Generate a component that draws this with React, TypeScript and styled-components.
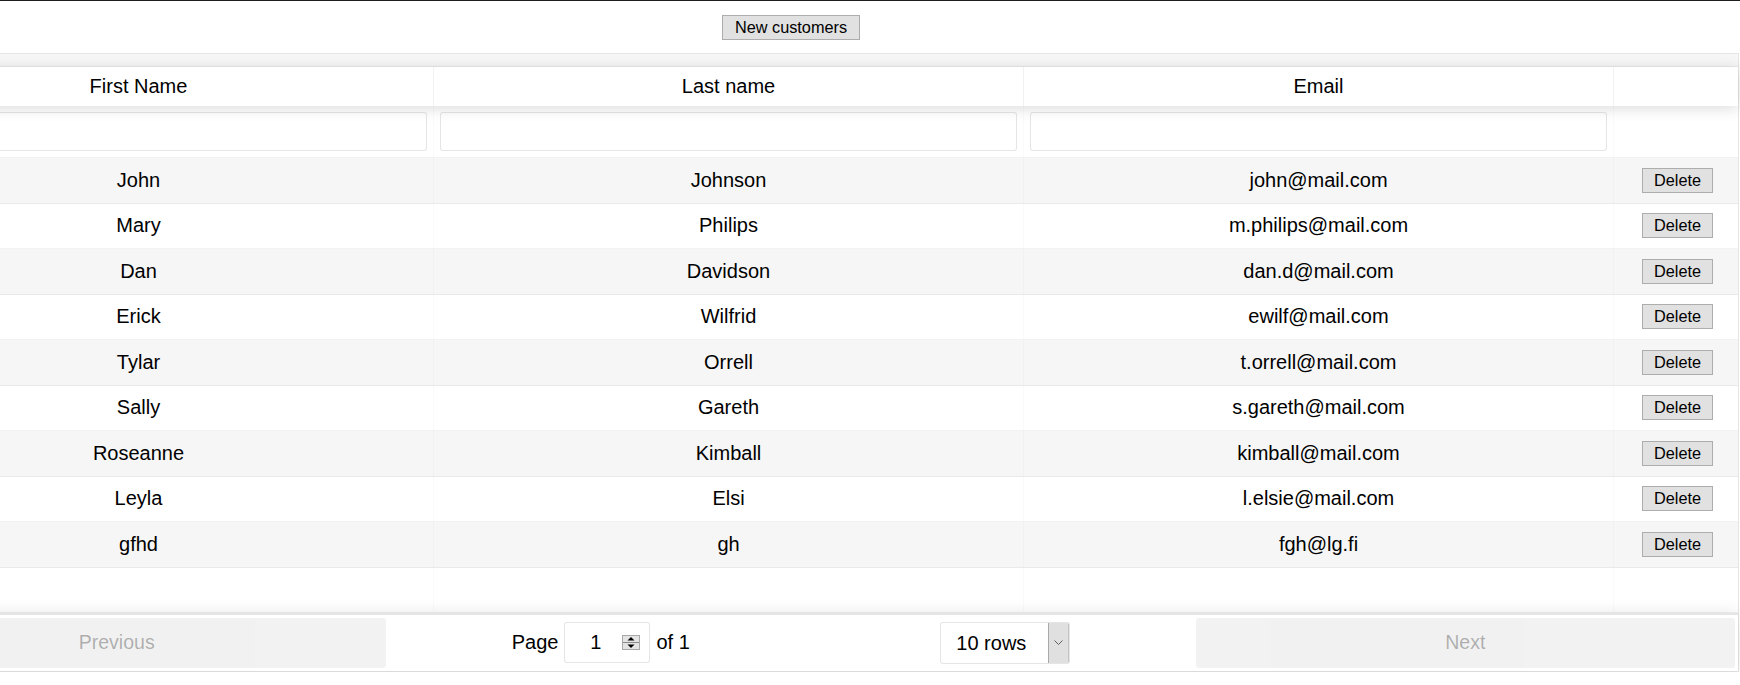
import React from 'react';
import styled, { createGlobalStyle } from 'styled-components';

const GlobalStyle = createGlobalStyle`
  html, body { margin: 0; padding: 0; background: #fff; overflow: hidden; }
  body {
    font-family: "Liberation Sans", Arial, sans-serif;
    border-top: 1px solid #1f1f1f;
    color: #000;
  }
  * { box-sizing: border-box; }
`;

const Page = styled.div`
  margin-left: -157px;
  width: 1896px;
`;

const Toolbar = styled.div`
  height: 52px;
  display: flex;
  align-items: center;
  justify-content: center;
`;

const WinButton = styled.button<{ $pad?: number }>`
  font-family: "Liberation Sans", Arial, sans-serif;
  font-size: 16.3px;
  height: 25px;
  line-height: 23px;
  padding: 0 ${p => p.$pad ?? 12}px;
  background: #e1e1e1;
  border: 1px solid #adadad;
  border-radius: 0;
  color: #000;
`;

const Table = styled.div`
  border: 1px solid rgba(0, 0, 0, 0.1);
  display: flex;
  flex-direction: column;
  font-size: 20px;
`;

const HeaderGroups = styled.div`
  height: 12.5px;
  background: rgba(0, 0, 0, 0.03);
  border-bottom: 1px solid rgba(0, 0, 0, 0.05);
`;

const Row = styled.div<{ $h: number; $striped?: boolean }>`
  display: flex;
  height: ${p => p.$h}px;
  background: ${p => (p.$striped ? 'rgba(0,0,0,0.035)' : 'transparent')};
`;

const HeaderRow = styled(Row)`
  position: relative;
  z-index: 2;
  background: #fff;
  box-shadow: 0 2px 15px 0 rgba(0, 0, 0, 0.15);
`;

const FilterRow = styled(Row)`
  border-bottom: 1px solid rgba(0, 0, 0, 0.05);
`;

const BodyRow = styled(Row)`
  border-bottom: 1px solid rgba(0, 0, 0, 0.05);
`;

const Cell = styled.div<{ $fixed?: boolean; $line?: string }>`
  flex: ${p => (p.$fixed ? '0 0 124px' : '1 1 0')};
  min-width: 0;
  display: flex;
  align-items: center;
  justify-content: center;
  white-space: nowrap;
  border-right: ${p => (p.$fixed ? '0' : `1px solid ${p.$line || 'rgba(0,0,0,0.05)'}`)};
`;

const ActionCell = styled(Cell)`
  padding-left: 3px;
`;

const FilterCell = styled(Cell)`
  padding: 6px;
`;

const FilterInput = styled.input`
  width: 100%;
  height: 39px;
  border: 1px solid rgba(0, 0, 0, 0.1);
  border-radius: 3px;
  background: #fff;
  padding: 5px 7px;
  font-size: 20px;
  font-family: inherit;
  outline: none;
`;

const Pagination = styled.div`
  position: relative;
  z-index: 2;
  display: flex;
  align-items: stretch;
  height: 57.5px;
  padding: 3px;
  border-top: 2px solid rgba(0, 0, 0, 0.1);
  box-shadow: 0 0 15px 0 rgba(0, 0, 0, 0.1);
  background: #fff;
`;

const NavSide = styled.div`
  flex: 1;
  display: flex;
`;

const NavButton = styled.button`
  width: 100%;
  height: 100%;
  border: 0;
  border-radius: 3px;
  padding: 6px;
  font-family: "Liberation Sans", Arial, sans-serif;
  font-size: 19.5px;
  color: rgba(0, 0, 0, 0.6);
  background: rgba(0, 0, 0, 0.1);
  opacity: 0.5;
  outline: none;
`;

const Center = styled.div`
  flex: 1.5;
  display: flex;
  align-items: center;
  justify-content: space-around;
`;

const PageInfo = styled.div`
  margin: 3px 12px;
  display: flex;
  align-items: center;
  gap: 6px;
  white-space: nowrap;
`;

const JumpBox = styled.div`
  width: 86px;
  height: 41px;
  border: 1px solid rgba(0, 0, 0, 0.1);
  border-radius: 3px;
  display: flex;
  align-items: center;
  padding-right: 9px;
  background: #fff;
`;

const JumpInput = styled.input`
  flex: 1;
  min-width: 0;
  border: 0;
  padding: 0 0 0 4px;
  background: transparent;
  text-align: center;
  font-family: inherit;
  font-size: 20px;
  outline: none;
`;

const SizeBox = styled.div`
  margin: 3px 12px;
  width: 130px;
  height: 42px;
  border: 1px solid rgba(0, 0, 0, 0.1);
  border-radius: 3px;
  display: flex;
  overflow: hidden;
  background: #fff;
`;

const SizeSelect = styled.select`
  flex: 1;
  min-width: 0;
  appearance: none;
  border: 0;
  background: transparent;
  padding: 0 0 0 15px;
  font-family: inherit;
  font-size: 20px;
  color: #000;
  outline: none;
`;

const ArrowBox = styled.div`
  width: 21px;
  background: #e0e0e0;
  border-left: 1px solid #a9a9a9;
  border-right: 1px solid #c4c4c4;
  display: flex;
  align-items: center;
  justify-content: center;
`;

const rows = [
  ['John', 'Johnson', 'john@mail.com'],
  ['Mary', 'Philips', 'm.philips@mail.com'],
  ['Dan', 'Davidson', 'dan.d@mail.com'],
  ['Erick', 'Wilfrid', 'ewilf@mail.com'],
  ['Tylar', 'Orrell', 't.orrell@mail.com'],
  ['Sally', 'Gareth', 's.gareth@mail.com'],
  ['Roseanne', 'Kimball', 'kimball@mail.com'],
  ['Leyla', 'Elsi', 'l.elsie@mail.com'],
  ['gfhd', 'gh', 'fgh@lg.fi'],
];

const Spinner = () => (
  <svg width="18" height="15" viewBox="0 0 18 15">
    <rect x="0.5" y="0.5" width="17" height="14" fill="#e4e4e4" stroke="#a8a8a8" />
    <line x1="1" y1="7.5" x2="17" y2="7.5" stroke="#8a8a8a" />
    <polygon points="5.5,5.5 12.5,5.5 9,2" fill="#000" />
    <polygon points="5.5,9.5 12.5,9.5 9,13" fill="#000" />
  </svg>
);

const Chevron = () => (
  <svg width="9" height="6" viewBox="0 0 9 6">
    <polyline points="0.5,0.5 4.5,4.5 8.5,0.5" fill="none" stroke="#5f5f5f" strokeWidth="1" />
  </svg>
);

export default function App() {
  const padded = [...rows, null];
  return (
    <>
      <GlobalStyle />
      <Page>
        <Toolbar>
          <WinButton>New customers</WinButton>
        </Toolbar>
        <Table>
          <HeaderGroups />
          <HeaderRow $h={39}>
            <Cell>First Name</Cell>
            <Cell>Last name</Cell>
            <Cell>Email</Cell>
            <Cell $fixed />
          </HeaderRow>
          <FilterRow $h={52.5}>
            <FilterCell $line="rgba(0,0,0,0.02)"><FilterInput /></FilterCell>
            <FilterCell $line="rgba(0,0,0,0.02)"><FilterInput /></FilterCell>
            <FilterCell $line="rgba(0,0,0,0.02)"><FilterInput /></FilterCell>
            <FilterCell $fixed />
          </FilterRow>
          {padded.map((r, i) => (
            <BodyRow key={i} $h={45.5} $striped={i % 2 === 0}>
              <Cell $line="rgba(0,0,0,0.02)">{r ? r[0] : '\u00a0'}</Cell>
              <Cell $line="rgba(0,0,0,0.02)">{r ? r[1] : '\u00a0'}</Cell>
              <Cell $line="rgba(0,0,0,0.02)">{r ? r[2] : '\u00a0'}</Cell>
              <ActionCell $fixed>{r ? <WinButton $pad={11}>Delete</WinButton> : null}</ActionCell>
            </BodyRow>
          ))}
          <Pagination>
            <NavSide>
              <NavButton disabled>Previous</NavButton>
            </NavSide>
            <Center>
              <PageInfo>
                <span>Page</span>
                <JumpBox>
                  <JumpInput defaultValue="1" />
                  <Spinner />
                </JumpBox>
                <span>of 1</span>
              </PageInfo>
              <SizeBox>
                <SizeSelect defaultValue="10">
                  <option value="10">10 rows</option>
                  <option value="20">20 rows</option>
                </SizeSelect>
                <ArrowBox>
                  <Chevron />
                </ArrowBox>
              </SizeBox>
            </Center>
            <NavSide>
              <NavButton disabled>Next</NavButton>
            </NavSide>
          </Pagination>
        </Table>
      </Page>
    </>
  );
}
